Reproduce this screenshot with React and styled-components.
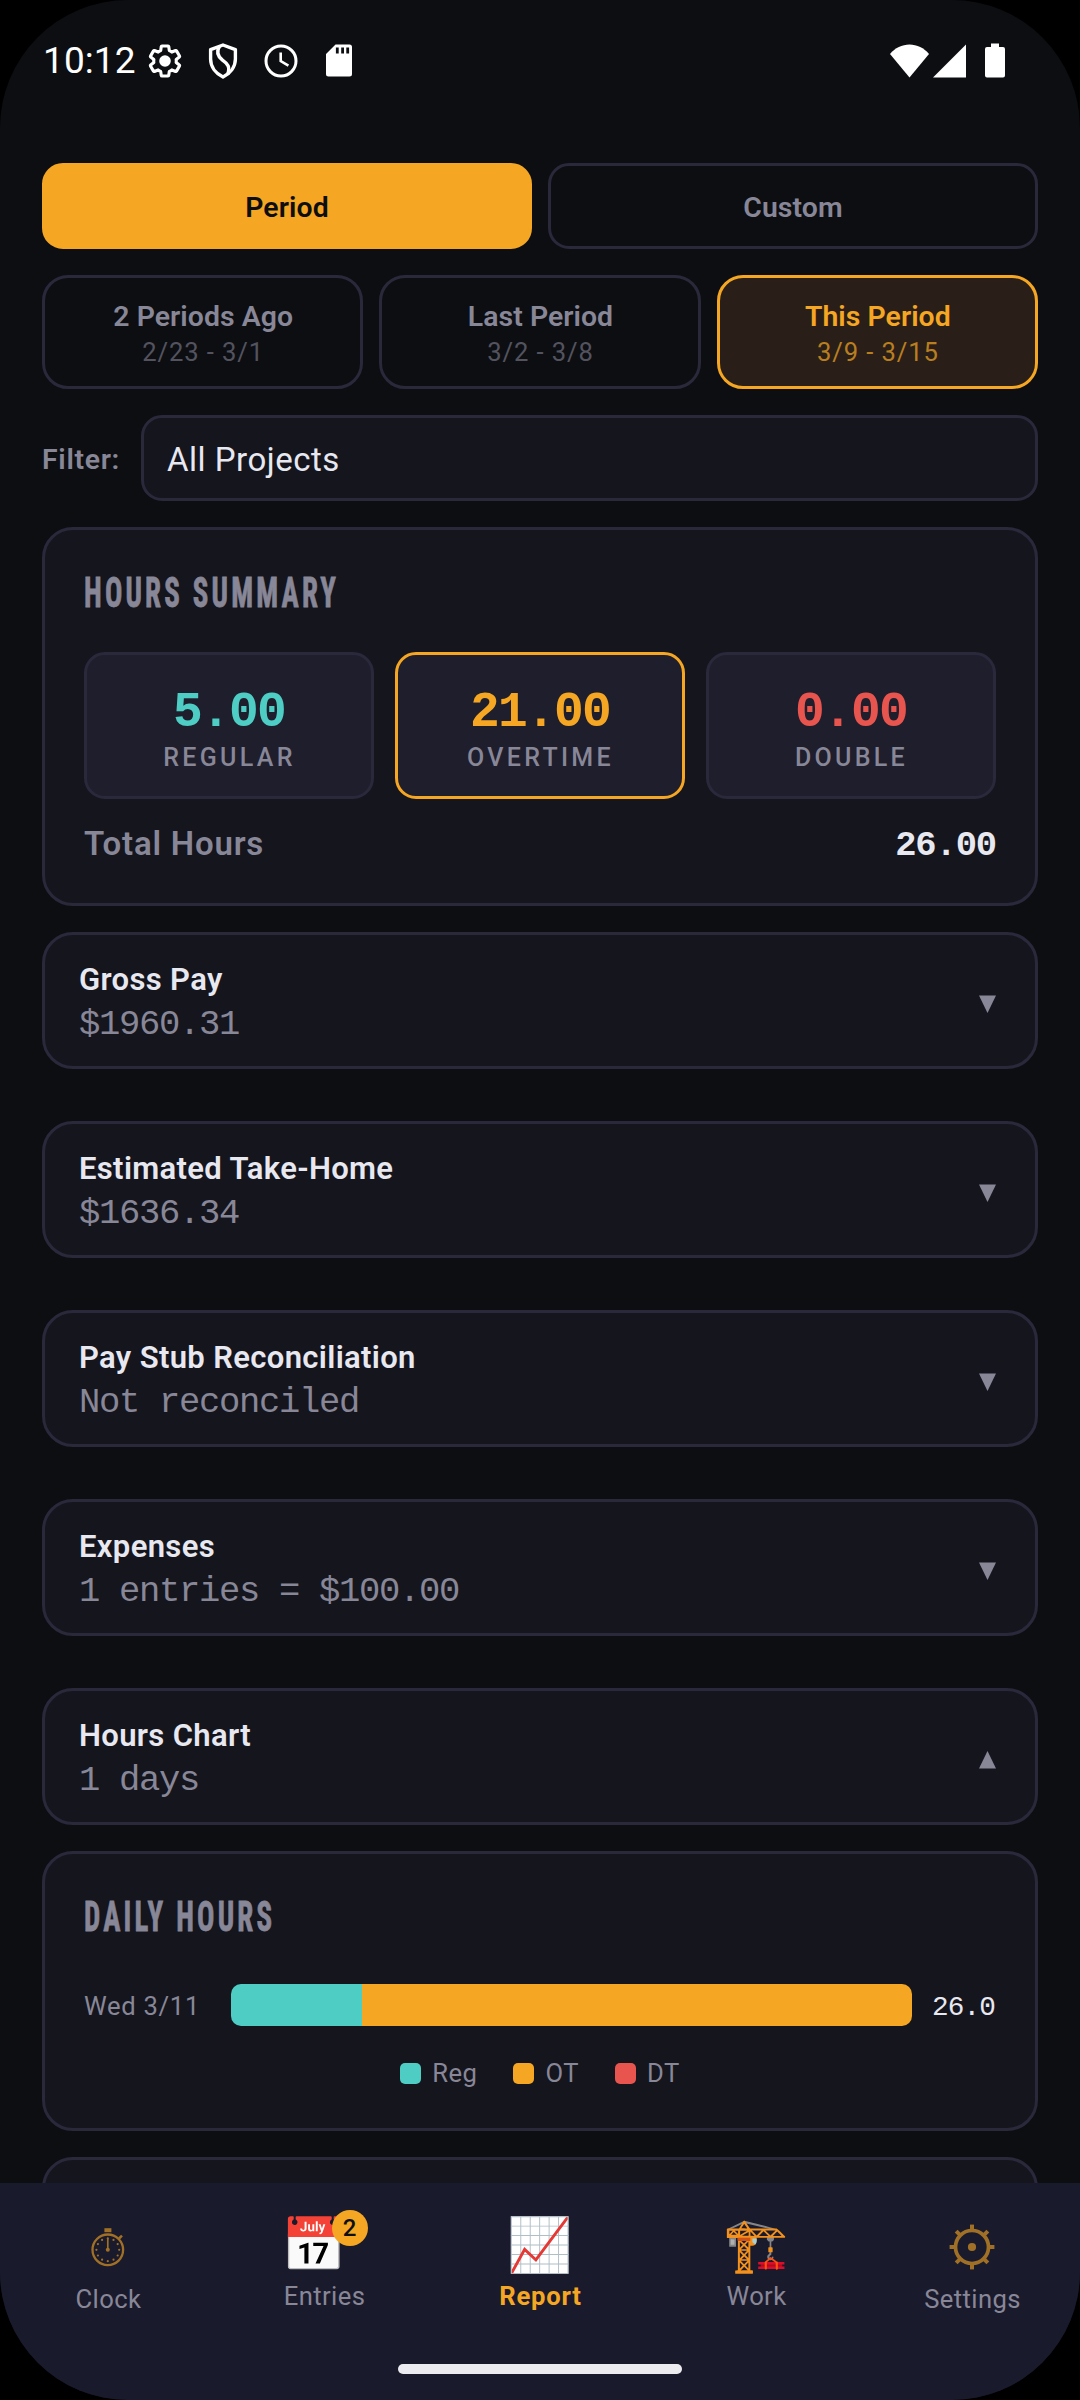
import React from 'react';
import styled, { createGlobalStyle } from 'styled-components';

const colors = {
  bg: '#0d0e12',
  card: '#15151e',
  tile: '#1f1e2d',
  nav: '#1a1a2d',
  border: '#2a293b',
  text: '#e8e8f0',
  muted: '#888797',
  dim: '#53535f',
  orange: '#f5a623',
  teal: '#4ecdc4',
  red: '#e8554e',
};

const sans = "Roboto, 'Open Sans', sans-serif";
const mono = "'Liberation Mono', 'DejaVu Sans Mono', monospace";

const GlobalStyle = createGlobalStyle`
  * {
    box-sizing: border-box;
  }

  body {
    margin: 0;
    background: #000;
    font-family: ${sans};
    color: ${colors.text};
  }
`;

const Screen = styled.div`
  width: 1080px;
  height: 2400px;
  border-radius: 128px;
  overflow: hidden;
  background: ${colors.bg};

  display: flex;
  flex-direction: column;
`;

// status bar

const StatusBarStyled = styled.header`
  flex: none;
  height: 121px;
  padding: 0 75px 0 43px;

  display: flex;
  align-items: center;
`;

const Time = styled.span`
  width: 93px;
  font-size: 37px;
  line-height: 44px;
  letter-spacing: 0.1px;
  color: #fff;
`;

const StatusCell = styled.span`
  width: 58px;
  display: flex;
  justify-content: center;
`;

const StatusRight = styled.div`
  margin-left: auto;

  display: flex;
  align-items: center;
`;

const Battery = styled.svg`
  margin-left: 19px;
`;

const Signal = styled.svg`
  margin-left: 4px;
`;

const GEAR_PATH = 'M19.14,12.94c0.04-0.3,0.06-0.61,0.06-0.94c0-0.32-0.02-0.64-0.07-0.94l2.03-1.58c0.18-0.14,0.23-0.41,0.12-0.61l-1.92-3.32c-0.12-0.22-0.37-0.29-0.59-0.22l-2.39,0.96c-0.5-0.38-1.03-0.7-1.62-0.94L14.4,2.81c-0.04-0.24-0.24-0.41-0.48-0.41h-3.84c-0.24,0-0.43,0.17-0.47,0.41L9.25,5.35C8.66,5.59,8.12,5.92,7.63,6.29L5.24,5.33c-0.22-0.08-0.47,0-0.59,0.22L2.74,8.87C2.62,9.08,2.66,9.34,2.86,9.48l2.03,1.58C4.84,11.36,4.8,11.69,4.8,12s0.02,0.64,0.07,0.94l-2.03,1.58c-0.18,0.14-0.23,0.41-0.12,0.61l1.92,3.32c0.12,0.22,0.37,0.29,0.59,0.22l2.39-0.96c0.5,0.38,1.03,0.7,1.62,0.94l0.36,2.54c0.05,0.24,0.24,0.41,0.48,0.41h3.84c0.24,0,0.44-0.17,0.47-0.41l0.36-2.54c0.59-0.24,1.13-0.56,1.62-0.94l2.39,0.96c0.22,0.08,0.47,0,0.59-0.22l1.92-3.32c0.12-0.22,0.07-0.47-0.12-0.61L19.14,12.94z';

const StatusBar = () => (
  <StatusBarStyled>
    <Time>10:12</Time>
    <StatusCell>
      <svg width="36" height="36" viewBox="0.5 0.5 23 23">
        <path d={GEAR_PATH} fill="none" stroke="#fff" strokeWidth="2" strokeLinejoin="round" />
        <circle cx="12" cy="12" r="3.7" fill="#fff" />
      </svg>
    </StatusCell>
    <StatusCell>
      <svg width="30" height="36" viewBox="0 0 30 36" fill="none" stroke="#fff" strokeWidth="3.4" strokeLinejoin="round">
        <path d="M15 2L2.6 6.6V16C2.6 24 8 30.6 15 34C22 30.6 27.4 24 27.4 16V6.6Z" />
        <path d="M11.5 3.4C8 9 10 13.6 14.5 17.2C20 21 22.4 24 19.6 31.4" />
      </svg>
    </StatusCell>
    <StatusCell>
      <svg width="34" height="34" viewBox="0 0 34 34" fill="none" stroke="#fff">
        <circle cx="17" cy="17" r="15" strokeWidth="3" />
        <path d="M16.7 8.5V17L24.4 21.6" strokeWidth="2.6" />
      </svg>
    </StatusCell>
    <StatusCell>
      <svg width="26" height="33" viewBox="0 0 26 33">
        <path d="M9.5 0.5H23.5A2.5 2.5 0 0 1 26 3V30A2.5 2.5 0 0 1 23.5 32.5H2.5A2.5 2.5 0 0 1 0 30V10Z" fill="#fff" />
        <path d="M11.3 3.5V9.6M16.6 3.5V9.6M21.7 3.5V9.6" stroke={colors.bg} strokeWidth="2.8" />
      </svg>
    </StatusCell>
    <StatusRight>
      <svg width="39" height="34" viewBox="0 0 39 34" fill="#fff">
        <path d="M19.5 33.5L0 10C5 4 12 0.5 19.5 0.5S34 4 39 10Z" />
      </svg>
      <Signal width="33" height="34" viewBox="0 0 33 34" fill="#fff">
        <path d="M33 0.5V33.5H0Z" />
      </Signal>
      <Battery width="20" height="35" viewBox="0 0 20 35" fill="#fff">
        <path d="M6 0.5H14V4H18A2 2 0 0 1 20 6V32.5A2 2 0 0 1 18 34.5H2A2 2 0 0 1 0 32.5V6A2 2 0 0 1 2 4H6Z" />
      </Battery>
    </StatusRight>
  </StatusBarStyled>
);

// filters

const Content = styled.main`
  flex: 1;
  min-height: 0;
  overflow: hidden;
  padding: 42px 42px 0;

  display: flex;
  flex-direction: column;
  gap: 26px;

  > * {
    flex: none;
  }
`;

const ButtonRow = styled.div`
  display: flex;
  gap: 16px;
`;

const ModeButton = styled.button`
  flex: 1;
  height: 86px;
  padding: 2px 0 0;
  border: 3px solid ${({ $active }) => ($active ? colors.orange : colors.border)};
  border-radius: 21px;
  background: ${({ $active }) => ($active ? colors.orange : 'transparent')};
  color: ${({ $active }) => ($active ? colors.bg : colors.muted)};
  font: 600 28.4px ${sans};
  letter-spacing: 0.1px;
`;

const PeriodButton = styled.button`
  flex: 1;
  height: 114px;
  padding: 20px 0 0 1px;
  border: 3px solid ${({ $active }) => ($active ? colors.orange : colors.border)};
  border-radius: 26px;
  background: ${({ $active }) => ($active ? '#2a1f18' : 'transparent')};
  color: ${({ $active }) => ($active ? colors.orange : colors.muted)};
  font-family: ${sans};

  display: flex;
  flex-direction: column;
  align-items: center;
`;

const PeriodName = styled.span`
  font-size: 28.4px;
  font-weight: 600;
  line-height: 37px;
  letter-spacing: 0.05px;
`;

const PeriodDates = styled.span`
  font-size: 25.6px;
  line-height: 34px;
  letter-spacing: 0.9px;
  color: ${({ $active }) => ($active ? '#b87e20' : colors.dim)};
`;

const FilterRow = styled.div`
  display: flex;
  align-items: center;
`;

const FilterLabel = styled.span`
  width: 99px;
  padding-top: 2px;
  font-size: 28.4px;
  font-weight: 600;
  letter-spacing: 0.7px;
  color: ${colors.muted};
`;

const ProjectSelect = styled.div`
  flex: 1;
  height: 86px;
  padding: 3px 23px 0;
  border: 3px solid ${colors.border};
  border-radius: 21px;
  background: ${colors.card};
  font-size: 33px;
  letter-spacing: 0.5px;

  display: flex;
  align-items: center;
`;

// cards

const Card = styled.section`
  height: ${({ $height }) => $height}px;
  padding: 39px;
  border: 3px solid ${colors.border};
  border-radius: 31px;
  background: ${colors.card};
`;

const CardTitle = styled.h2`
  width: max-content;
  margin: 0 0 ${({ $gap }) => $gap}px;
  font-family: 'Roboto Condensed', Roboto, sans-serif;
  font-size: 41.8px;
  font-weight: 700;
  line-height: 48px;
  letter-spacing: 4.6px;
  color: ${colors.muted};
  -webkit-text-stroke: 0.8px ${colors.muted};
  transform: scaleX(0.69);
  transform-origin: left;
`;

const Stats = styled.div`
  display: flex;
  gap: 21px;
`;

const Stat = styled.div`
  flex: 1;
  height: 147px;
  padding-top: 33px;
  border: 3px solid ${({ $highlight }) => ($highlight ? colors.orange : colors.border)};
  border-radius: 21px;
  background: ${colors.tile};

  display: flex;
  flex-direction: column;
  align-items: center;
`;

const StatValue = styled.span`
  font-family: ${mono};
  font-size: 49.5px;
  font-weight: 700;
  line-height: 51px;
  letter-spacing: -1.7px;
  color: ${({ $color }) => $color};
`;

const StatLabel = styled.span`
  padding-left: 1px;
  font-size: 25px;
  font-weight: 550;
  line-height: 38px;
  letter-spacing: 3.3px;
  color: ${colors.muted};
`;

const TotalRow = styled.div`
  margin-top: 24px;
  line-height: 42px;

  display: flex;
  justify-content: space-between;
  align-items: baseline;
`;

const TotalLabel = styled.span`
  font-size: 33px;
  font-weight: 600;
  letter-spacing: 0.8px;
  color: ${colors.muted};
`;

const TotalValue = styled.span`
  font-family: ${mono};
  font-size: 35.5px;
  font-weight: 700;
  letter-spacing: -1.14px;
`;

// collapsible sections

const SectionHeader = styled.div`
  height: 137px;
  margin-bottom: ${({ $open }) => ($open ? 0 : 26)}px;
  padding: 24px 39px 0 34px;
  border: 3px solid ${colors.border};
  border-radius: 31px;
  background: ${colors.card};

  display: flex;
  justify-content: space-between;
`;

const SectionTitle = styled.div`
  font-size: 31px;
  font-weight: 600;
  line-height: 42px;
  letter-spacing: 0.35px;
`;

const SectionSummary = styled.div`
  font-family: ${mono};
  font-size: 35.5px;
  line-height: 47px;
  letter-spacing: -1.31px;
  color: ${colors.muted};
`;

const Arrow = styled.svg`
  margin-top: 36px;
`;

const Section = ({ title, summary, open }) => (
  <SectionHeader $open={open}>
    <div>
      <SectionTitle>{title}</SectionTitle>
      <SectionSummary>{summary}</SectionSummary>
    </div>
    <Arrow width="17" height="18" viewBox="0 0 17 18" fill={colors.muted}>
      <path d={open ? 'M8.5 0L17 17.5H0Z' : 'M0 0.5H17L8.5 18Z'} />
    </Arrow>
  </SectionHeader>
);

// chart

const BarRow = styled.div`
  display: flex;
  align-items: center;
  gap: 21px;
`;

const BarLabel = styled.span`
  width: 126px;
  padding-top: 2px;
  font-size: 25.6px;
  letter-spacing: 0.7px;
  color: ${colors.muted};
`;

const BarTrack = styled.div`
  flex: 1;
  height: 42px;
  border-radius: 10px;
  overflow: hidden;

  display: flex;
`;

const BarPart = styled.div`
  background: ${({ $color }) => $color};
`;

const BarValue = styled.span`
  width: 63px;
  padding-top: 4px;
  font-family: ${mono};
  font-size: 27.7px;
  letter-spacing: -0.87px;
  text-indent: -1px;
`;

const Legend = styled.div`
  margin-top: 30px;

  display: flex;
  justify-content: center;
  gap: 36px;
`;

const LegendItem = styled.span`
  height: 34px;
  font-size: 25.6px;
  letter-spacing: 0.5px;
  color: ${colors.muted};

  display: flex;
  align-items: center;
  gap: 11px;
`;

const Swatch = styled.i`
  width: 21px;
  height: 21px;
  border-radius: 5px;
  background: ${({ $color }) => $color};
`;

// bottom navigation

const NavBar = styled.nav`
  flex: none;
  height: 217px;
  background: ${colors.nav};

  display: flex;
  flex-direction: column;
`;

const NavItems = styled.div`
  display: flex;
`;

const NavItem = styled.div`
  flex: 1;
  padding-top: ${({ $glyph }) => ($glyph ? 29 : 26)}px;

  display: flex;
  flex-direction: column;
  align-items: center;
`;

const NavIcon = styled.span`
  position: relative;
  height: 70px;
  padding-top: ${({ $glyph }) => ($glyph ? 0 : 3)}px;
  margin-right: ${({ $badge }) => ($badge ? 20 : 0)}px;
  font-family: 'Noto Color Emoji', sans-serif;
  font-size: 52.5px;
  line-height: 67px;

  display: flex;
  align-items: center;
`;

const Badge = styled.span`
  position: absolute;
  top: 1px;
  right: -21px;
  width: 36px;
  height: 36px;
  border-radius: 50%;
  background: ${colors.orange};
  color: ${colors.bg};
  font: 500 24px/37px ${sans};
  text-align: center;
`;

const NavLabel = styled.span`
  padding-left: 1px;
  font-size: 25.6px;
  font-weight: ${({ $active }) => ($active ? 700 : 400)};
  line-height: 34px;
  letter-spacing: ${({ $active }) => ($active ? 0.8 : 0.4)}px;
  color: ${({ $active }) => ($active ? colors.orange : colors.muted)};
`;

const HomeIndicator = styled.div`
  width: 284px;
  height: 10px;
  margin: auto auto 26px;
  border-radius: 5px;
  background: #ececf0;
`;

const glyphColor = '#a07026';
const clockMarks = [...Array(12).keys()].map((i) => (i * Math.PI) / 6);
const gearTeeth = [...Array(8).keys()].map((i) => i * 45);

const StopwatchIcon = () => (
  <svg width="36" height="40" viewBox="0 0 36 40" fill={glyphColor}>
    <circle cx="17.8" cy="22.8" r="15.3" fill="none" stroke={glyphColor} strokeWidth="2.3" />
    <rect x="14.4" y="1.2" width="7" height="4" />
    <path d="M29 11.5L32 8.6" stroke={glyphColor} strokeWidth="2.6" />
    <path d="M17.8 22.8V11.5" stroke={glyphColor} strokeWidth="1.7" />
    <circle cx="17.8" cy="22.8" r="2" />
    {clockMarks.map((a) => (
      <circle key={a} cx={17.8 + 11.4 * Math.sin(a)} cy={22.8 - 11.4 * Math.cos(a)} r="1.1" />
    ))}
  </svg>
);

const CogIcon = () => (
  <svg width="46" height="46" viewBox="-23 -23 46 46" fill={glyphColor}>
    <circle r="16.5" fill="none" stroke={glyphColor} strokeWidth="3.7" />
    <circle r="4.1" />
    {gearTeeth.map((deg) => (
      <rect key={deg} x="-2" y="-22.4" width="4" height="6" transform={`rotate(${deg})`} />
    ))}
  </svg>
);

const sections = [
  { title: 'Gross Pay', summary: '$1960.31' },
  { title: 'Estimated Take-Home', summary: '$1636.34' },
  { title: 'Pay Stub Reconciliation', summary: 'Not reconciled' },
  { title: 'Expenses', summary: '1 entries = $100.00' },
  { title: 'Hours Chart', summary: '1 days', open: true },
];

const periods = [
  { name: '2 Periods Ago', dates: '2/23 - 3/1' },
  { name: 'Last Period', dates: '3/2 - 3/8' },
  { name: 'This Period', dates: '3/9 - 3/15', active: true },
];

const stats = [
  { label: 'REGULAR', value: '5.00', color: colors.teal },
  { label: 'OVERTIME', value: '21.00', color: colors.orange, highlight: true },
  { label: 'DOUBLE', value: '0.00', color: colors.red },
];

const days = [{ label: 'Wed 3/11', reg: 5, ot: 21 }];

const legend = [
  { label: 'Reg', color: colors.teal },
  { label: 'OT', color: colors.orange },
  { label: 'DT', color: colors.red },
];

const navItems = [
  { label: 'Clock', icon: <StopwatchIcon />, glyph: true },
  { label: 'Entries', icon: '📅', badge: 2 },
  { label: 'Report', icon: '📈', active: true },
  { label: 'Work', icon: '🏗️' },
  { label: 'Settings', icon: <CogIcon />, glyph: true },
];

const App = () => (
  <Screen>
    <GlobalStyle />
    <StatusBar />
    <Content>
      <ButtonRow>
        <ModeButton $active>Period</ModeButton>
        <ModeButton>Custom</ModeButton>
      </ButtonRow>
      <ButtonRow>
        {periods.map(({ name, dates, active }) => (
          <PeriodButton key={name} $active={active}>
            <PeriodName>{name}</PeriodName>
            <PeriodDates $active={active}>{dates}</PeriodDates>
          </PeriodButton>
        ))}
      </ButtonRow>
      <FilterRow>
        <FilterLabel>Filter:</FilterLabel>
        <ProjectSelect>All Projects</ProjectSelect>
      </FilterRow>
      <Card $height={379}>
        <CardTitle $gap={35}>HOURS SUMMARY</CardTitle>
        <Stats>
          {stats.map(({ label, value, color, highlight }) => (
            <Stat key={label} $highlight={highlight}>
              <StatValue $color={color}>{value}</StatValue>
              <StatLabel>{label}</StatLabel>
            </Stat>
          ))}
        </Stats>
        <TotalRow>
          <TotalLabel>Total Hours</TotalLabel>
          <TotalValue>26.00</TotalValue>
        </TotalRow>
      </Card>
      {sections.map(({ title, summary, open }) => (
        <Section key={title} title={title} summary={summary} open={open} />
      ))}
      <Card $height={280}>
        <CardTitle $gap={43}>DAILY HOURS</CardTitle>
        {days.map(({ label, reg, ot }) => (
          <BarRow key={label}>
            <BarLabel>{label}</BarLabel>
            <BarTrack>
              <BarPart $color={colors.teal} style={{ width: `${(reg / (reg + ot)) * 100}%` }} />
              <BarPart $color={colors.orange} style={{ width: `${(ot / (reg + ot)) * 100}%` }} />
            </BarTrack>
            <BarValue>{(reg + ot).toFixed(1)}</BarValue>
          </BarRow>
        ))}
        <Legend>
          {legend.map(({ label, color }) => (
            <LegendItem key={label}>
              <Swatch $color={color} />
              {label}
            </LegendItem>
          ))}
        </Legend>
      </Card>
      <Card $height={280} />
    </Content>
    <NavBar>
      <NavItems>
        {navItems.map(({ label, icon, glyph, badge, active }) => (
          <NavItem key={label} $glyph={glyph}>
            <NavIcon $badge={badge} $glyph={glyph}>
              {icon}
              {badge && <Badge>{badge}</Badge>}
            </NavIcon>
            <NavLabel $active={active}>{label}</NavLabel>
          </NavItem>
        ))}
      </NavItems>
      <HomeIndicator />
    </NavBar>
  </Screen>
);

export default App;
